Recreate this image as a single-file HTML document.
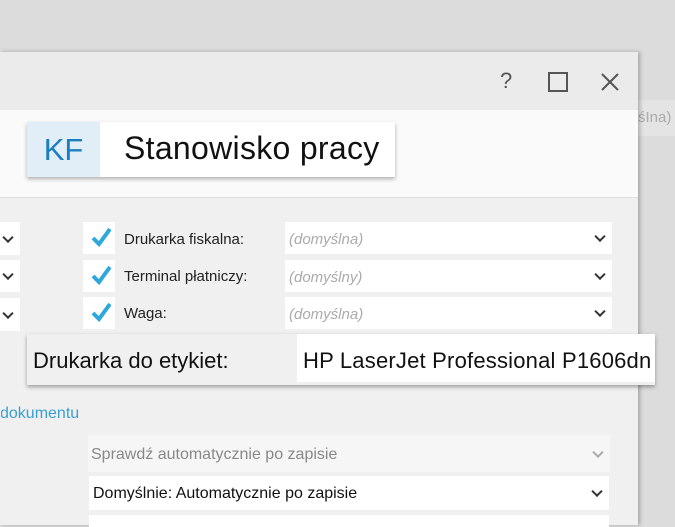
<!DOCTYPE html><html><head><style>
body{margin:0;width:675px;height:525px;overflow:hidden;background:#dcdcdc;font-family:"Liberation Sans",sans-serif;position:relative}
.a{position:absolute}
.cb{background:#fff}
.chev{position:absolute;right:8px;top:50%;width:6px;height:6px;border-right:2px solid #333;border-bottom:2px solid #333;transform:translateY(-70%) rotate(45deg)}
.lbl{font-size:15px;color:#222}
.ph{font-size:15px;color:#aaa;font-style:italic;position:absolute;left:4px;top:9px}
.ck{position:absolute;left:8px;top:4px}
</style></head><body>
<div class="a" style="left:638px;top:100px;width:37px;height:36px;background:#e4e4e4;color:#aaa;font-size:15px;line-height:36px">śIna)</div>
<div class="a" style="left:0;top:52px;width:638px;height:473px;background:#f0f0f0;box-shadow:2px 0 4px rgba(0,0,0,.25)"></div>
<div class="a" style="left:0;top:52px;width:638px;height:58px;background:#ebebeb"></div>
<div class="a" style="left:500px;top:68px;font-size:22px;color:#555">?</div>
<div class="a" style="left:548px;top:72px;width:16px;height:16px;border:2px solid #555"></div>
<svg class="a" style="left:600px;top:72px" width="20" height="20"><path d="M2 2L18 18M18 2L2 18" stroke="#555" stroke-width="2"/></svg>
<div class="a" style="left:0;top:110px;width:638px;height:87px;background:#fafafa;border-bottom:1px solid #ddd"></div>
<div class="a" style="left:27px;top:122px;width:368px;height:55px;background:#fff;box-shadow:0 2px 4px rgba(0,0,0,.3)">
<div class="a" style="left:0;top:0;width:73px;height:55px;background:#e1eef8;color:#1a7fc0;font-size:31px;line-height:56px;text-align:center">KF</div>
<div class="a" style="left:97px;top:0;font-size:32px;line-height:53px;color:#111;letter-spacing:0.3px">Stanowisko pracy</div></div>

<div class="a cb" style="left:0;top:222px;width:20px;height:33px"><div class="chev"></div></div>
<div class="a cb" style="left:0;top:260px;width:20px;height:32px"><div class="chev"></div></div>
<div class="a cb" style="left:0;top:298px;width:20px;height:33px"><div class="chev"></div></div>

<div class="a cb" style="left:83px;top:222px;width:32px;height:32px"><svg class="ck" width="20" height="22"><path d="M2 12L8 18L19 3" stroke="#2ea8dc" stroke-width="4" fill="none"/></svg></div>
<div class="a cb" style="left:83px;top:260px;width:32px;height:32px"><svg class="ck" width="20" height="22"><path d="M2 12L8 18L19 3" stroke="#2ea8dc" stroke-width="4" fill="none"/></svg></div>
<div class="a cb" style="left:83px;top:297px;width:32px;height:32px"><svg class="ck" width="20" height="22"><path d="M2 12L8 18L19 3" stroke="#2ea8dc" stroke-width="4" fill="none"/></svg></div>
<div class="a lbl" style="left:124px;top:231px">Drukarka fiskalna:</div>
<div class="a lbl" style="left:124px;top:268px">Terminal płatniczy:</div>
<div class="a lbl" style="left:124px;top:305px">Waga:</div>
<div class="a cb" style="left:285px;top:222px;width:327px;height:32px"><span class="ph">(domyślna)</span><div class="chev"></div></div>
<div class="a cb" style="left:285px;top:260px;width:327px;height:32px"><span class="ph">(domyślny)</span><div class="chev"></div></div>
<div class="a cb" style="left:285px;top:297px;width:327px;height:32px"><span class="ph">(domyślna)</span><div class="chev"></div></div>

<div class="a" style="left:27px;top:334px;width:628px;height:51px;background:#f0f0f0;box-shadow:0 2px 4px rgba(0,0,0,.35)">
<div class="a" style="left:6px;top:14px;font-size:22px;color:#111">Drukarka do etykiet:</div>
<div class="a cb" style="left:270px;top:0;width:358px;height:48px"><div class="a" style="left:6px;top:14px;font-size:22px;color:#111;white-space:nowrap;letter-spacing:0.2px">HP LaserJet Professional P1606dn</div></div></div>

<div class="a" style="left:0;top:405px;font-size:16px;color:#3aa0d0">dokumentu</div>
<div class="a" style="left:-3px;top:404px;width:4px;height:20px;background:#f0f0f0"></div>
<div class="a" style="left:88px;top:435px;width:522px;height:37px;background:#f6f6f6"><span class="a" style="left:3px;top:11px;font-size:16px;color:#888">Sprawdź automatycznie po zapisie</span><div class="chev" style="border-color:#aaa"></div></div>
<div class="a cb" style="left:89px;top:476px;width:520px;height:34px"><span class="a" style="left:4px;top:9px;font-size:16px;color:#111">Domyślnie: Automatycznie po zapisie</span><div class="chev"></div></div>
<div class="a cb" style="left:89px;top:515px;width:520px;height:12px"></div>
</body></html>
